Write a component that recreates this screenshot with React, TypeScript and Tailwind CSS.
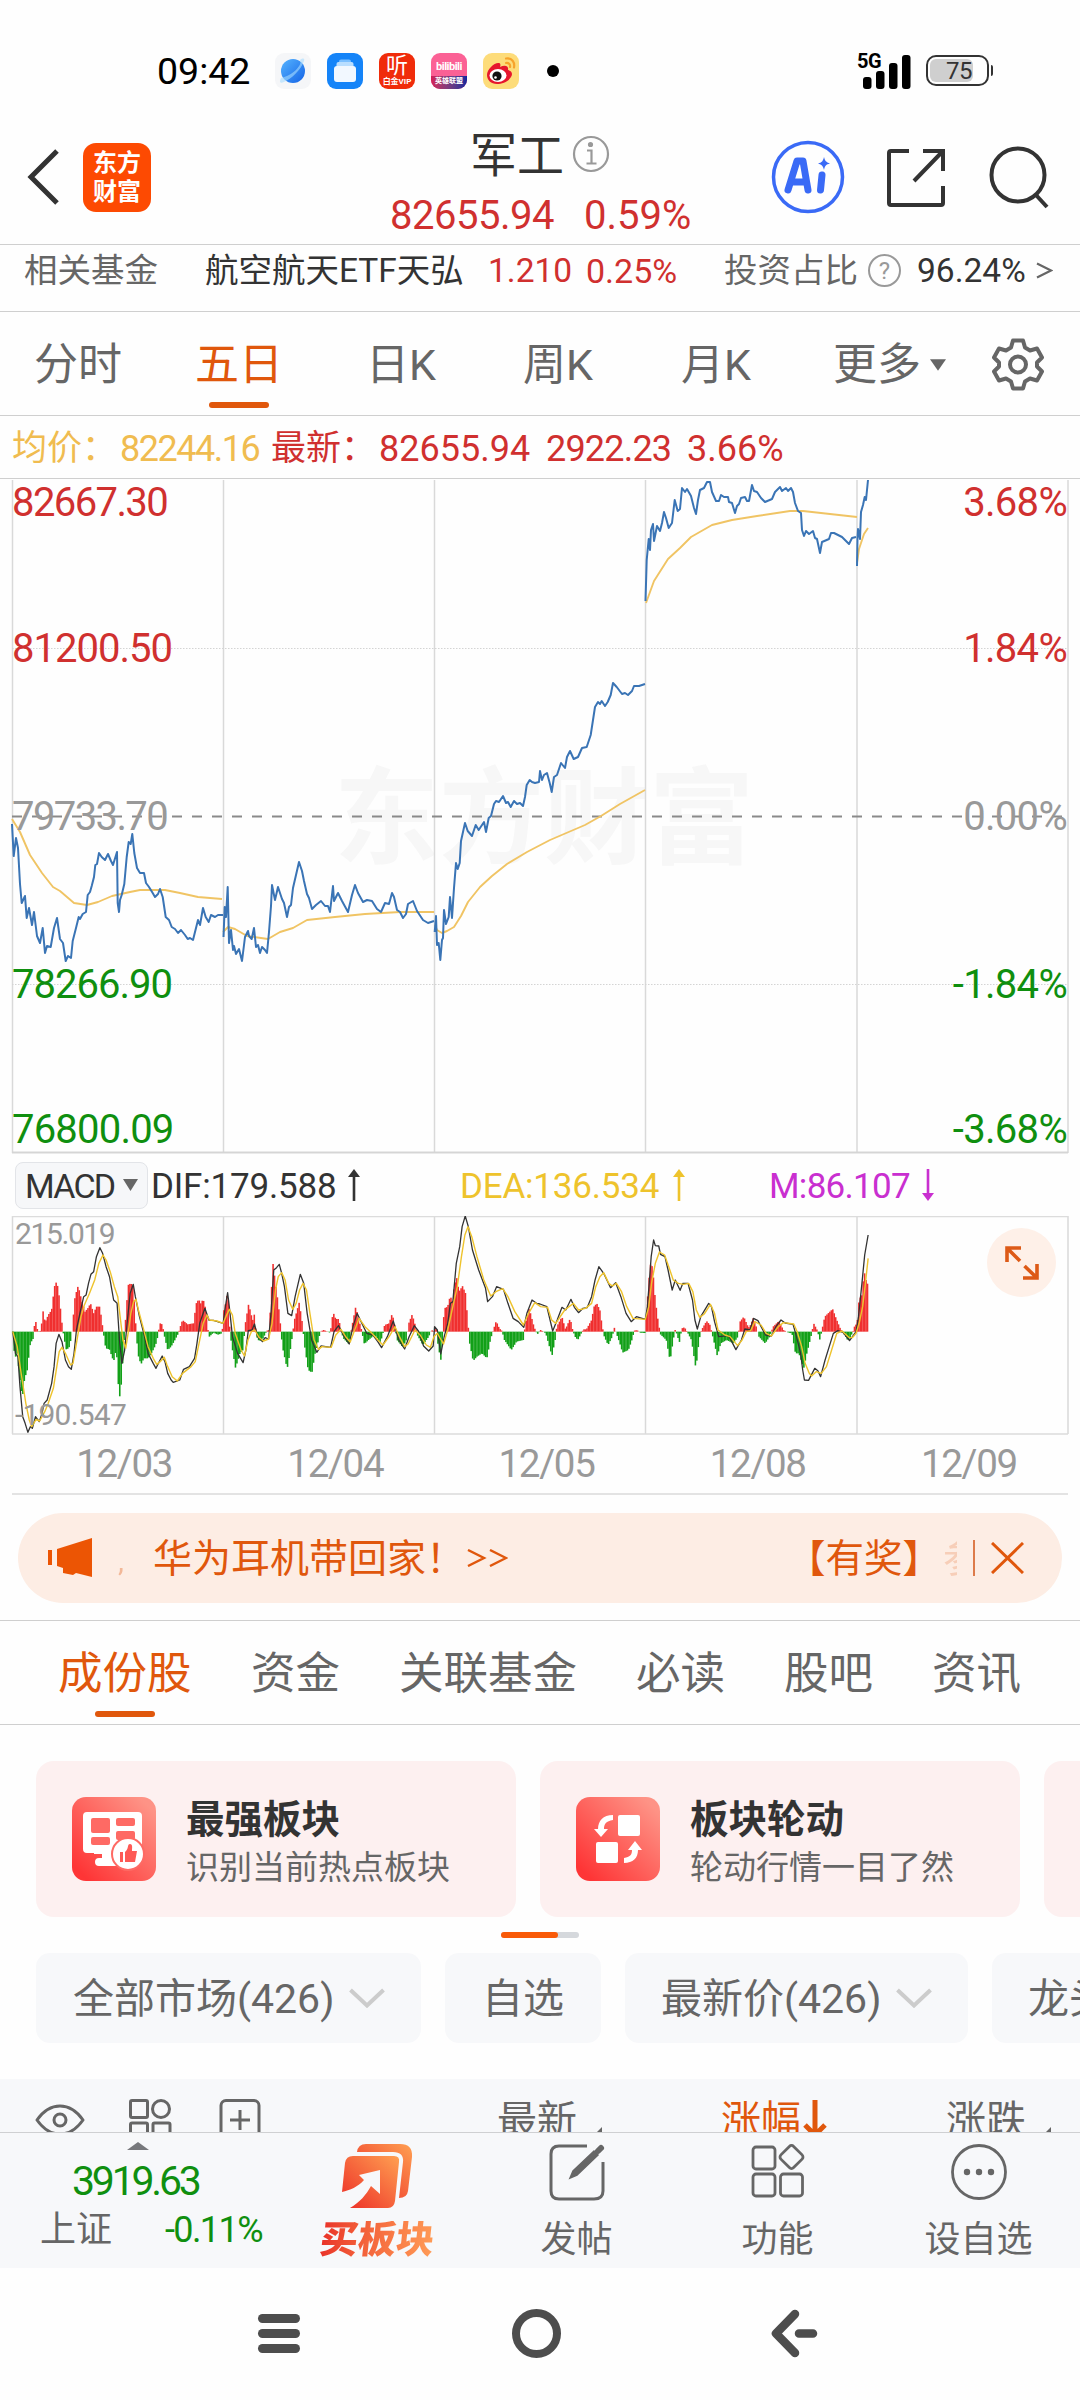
import React from 'react';

const VLINES = [12.5, 223.5, 434.5, 645.5, 857, 1068];

const PRICE_LINES = [
  '12,824 13.7,856 16,838 18,848 20,884 21.7,903 25,896 26.7,918 29,908 32,925 34,912 37,936 40,943 42.7,928 45,953 47,946 50.7,947 54,928 57,918 60,939 63,943 65.7,961 68,956 71,958 72.7,941 76,928 78.7,917 80,919 82.7,914 86,912 87.7,895 90,892 91.7,886 94,877 95.3,865 97,864 99,853 101.7,857 105,860 108,854 111,861 113,865 117,852 117.7,903 119,912 120,900 121.7,895 124.3,884 126.7,857 128.7,842 130.7,844 132.3,834 134.3,853 137,868 140,873 144,873 146,883 149,887 152.7,893 155,897 158,894 160,889 162.7,897 165.7,917 169,920 171.7,927 175,929 178,933 181,930 185,935 187.7,939 190,938 193,940 196,928 198,920 200,925 203,908 205.7,917 208.7,922 211,915 215,917 218,915 223,915',
  '223.5,937 224.7,907 226,917 227.7,887 229,943 231,930 233,950 234,946 236,954 239,949 242,961 245,937 248,931 249,936 251.7,939 254,928 256,947 258,945 260,953 262,947 265,950 267,953 269,932 271,906 272,885 275,900 278,887 282,899 284,903 287,917 289,907 291,905 293,888 296,875 299,862 302,871 304,881 307,894 309,898 312,909 316,905 321,901 325,906 328,906 330,912 333,886 334,901 338,893 342,901 348,912 352,895 355,885 358,893 363,902 367,900 372,901 377,909 381,912 385,903 389,904 392,893 394,897 397,910 400,912 403,918 406,914 408,904 413,901 417,911 423,920 428,923 434,921',
  '434.7,932 436,916 437,945 438.7,943 440.3,960 442,940 443,938 444,910 446,924 448.7,917 450,897 452,918 454,888 456,863 457.7,869 459.7,863 461,841 465,823 467.7,831 472,836 475.7,825 478.7,830 484,822 486,832 488.7,818 491,816 494,804 496,801 499,802 503,796 506,803 508,802 510.7,807 514,801 517,804 520,803 523,806 525,797 526.7,785 529.7,780 532,782 535,783 539,782 540,771 542,780 544,775 547,773 549.7,783 551.7,792 554,777 557,775 561,763 565,768 567,757 570,751 573.7,759 578,757 582,748 586.7,747 590.7,735 593,720 595,707 598,702 600,704 601.7,701 605,706 607.7,702 610.7,695 613,683 616.7,687 622,694 625,693 628,695 632,691 634,686 639,686 645,684',
  '645.5,601 646.7,560 648.7,539 650,550 651,530 653,524 654,541 657,526 660,531 662,523 664,512 666,518 668.7,528 672,523 674.7,500 677.7,511 680,509 682,488 685,492 687,489 691,496 694,508 696,514 698,500 700,490 704,488 707,482 710,482 712,492 716,501 719,501 721,495 724,497 728,497 729,502 732,503 735,513 737,506 739,504 741,498 745,497 747,501 749,501 752,485 754,491 757,492 761,498 765,502 772,499 775,492 780,487 782,491 786,488 788,491 791,488 793,492 795,503 798,511 801,513 802,530 804,536 806,531 809,534 813,531 815,538 817,539 820,553 822,542 829,539 831,533 834,533 842,537 849,544 852,538 856,537',
  '857,566 857.5,538 858,529 860,539 861,512 863,505 864.7,497 866,500 868,480',
];

const AVG_LINES = [
  '12,819 20,832 30,855 42,873 53,887 60,891 74,903 87,905 98,902 112,896 130,892 140,890 165,890 180,893 198,897 222,899',
  '223,932 228,927 235,929 247,936 268,939 280,932 293,928 307,920 335,917 365,914 400,912 434,912',
  '435,925 437,930 442,933 447,931 454,927 461,916 468,902 480,887 492,876 507,864 527,852 550,840 585,825 601,816 620,804 645,790',
  '646,603 654,581 668,559 680,548 691,537 712,525 732,520 757,516 790,511 803,511 830,514 857,517',
  '857,563 859,549 862,540 864,534 868,528',
];

const DIF =
  '37,575 45,640 52,650 58,740 66,830 73,850 81,877 88,860 94,865 103,830 114,845 122,820 128,790 137,780 150,730 157,680 163,610 171,583 180,605 190,660 199,680 207,688 215,640 222,570 232,520 243,470 250,465 257,430 264,403 272,395 280,350 290,323 298,340 308,380 318,410 330,480 340,490 347,600 354,670 362,630 370,540 378,460 387,433 393,470 405,530 420,590 430,640 445,670 453,685 460,670 471,648 479,665 487,700 497,720 503,727 522,720 533,688 550,680 565,655 572,610 580,550 595,505 607,541 620,541 648,550 653,510 661,458 667,510 675,590 690,640 706,668 714,630 721,572 732,570 739,552 748,590 762,605 770,593 780,597 787,520 795,390 803,383 811,373 818,400 826,440 836,520 847,527 857,470 872,403 882,430 892,520 905,600 920,637 932,618 960,622 970,575 983,557 1000,590 1014,612 1025,560 1037,520 1050,548 1065,580 1083,585 1097,605 1108,623 1125,590 1142,543 1158,600 1175,627 1188,590 1203,557 1215,573 1230,618 1245,633 1258,618 1262,560 1270,570 1280,642 1290,590 1300,550 1308,490 1315,485 1325,370 1335,320 1342,260 1351,228 1360,260 1372,330 1390,390 1410,445 1416,485 1430,470 1442,440 1462,448 1475,490 1490,535 1505,545 1521,562 1530,520 1545,480 1558,490 1568,492 1588,500 1605,573 1618,540 1632,502 1643,510 1658,478 1668,502 1680,518 1693,505 1705,503 1718,470 1728,420 1739,380 1753,400 1773,443 1788,428 1803,470 1818,520 1833,545 1848,530 1874,538 1880,500 1886,420 1891,350 1898,300 1903,317 1913,318 1918,343 1931,350 1940,390 1952,450 1961,420 1975,451 1983,430 1998,430 2011,480 2018,540 2025,567 2035,530 2058,490 2066,500 2075,545 2087,590 2116,587 2137,629 2153,600 2163,567 2178,570 2188,535 2201,542 2223,585 2240,588 2253,560 2268,540 2280,549 2303,553 2313,590 2325,640 2331,690 2336,720 2348,721 2366,685 2375,692 2383,710 2396,660 2408,620 2420,580 2433,572 2448,577 2467,602 2486,575 2493,530 2503,430 2511,345 2521,285';

const DEA =
  '37,575 50,620 60,690 75,790 85,840 92,860 105,838 115,843 130,815 140,790 155,745 165,680 172,635 180,622 190,640 205,675 212,670 222,610 235,530 245,495 260,460 275,420 287,370 299,345 308,360 320,395 332,440 342,470 350,540 357,600 365,625 372,580 380,520 388,485 395,478 402,510 415,560 430,620 445,655 455,673 465,665 477,652 485,675 500,710 515,723 530,700 555,680 567,665 578,610 590,550 601,525 608,540 630,543 648,550 656,530 666,508 675,525 683,580 700,630 710,648 720,600 730,575 740,570 752,592 765,603 780,597 790,550 800,450 808,410 818,398 828,420 838,480 850,508 860,490 870,450 880,430 890,450 900,520 912,600 925,628 935,620 962,622 975,585 990,568 1005,592 1017,606 1030,570 1043,535 1060,560 1080,580 1100,603 1112,615 1130,590 1147,560 1160,590 1175,620 1185,612 1205,570 1220,585 1238,615 1250,622 1260,590 1270,580 1288,612 1300,570 1315,500 1328,440 1340,350 1350,285 1359,260 1370,290 1385,350 1405,420 1425,468 1440,455 1460,446 1475,470 1495,515 1520,555 1535,520 1553,488 1570,500 1590,502 1602,540 1614,550 1630,525 1640,510 1665,490 1680,510 1700,505 1718,490 1730,440 1742,410 1753,398 1768,430 1778,438 1790,430 1805,455 1820,500 1838,535 1874,538 1884,500 1892,430 1903,370 1915,336 1930,345 1942,380 1955,420 1970,430 1985,433 2000,430 2012,455 2022,510 2032,532 2045,522 2063,493 2075,520 2085,570 2105,585 2120,590 2142,617 2155,600 2167,575 2180,572 2192,545 2210,555 2225,580 2240,588 2260,560 2275,548 2305,552 2315,575 2328,620 2338,670 2350,700 2357,708 2370,695 2385,700 2400,680 2415,630 2430,580 2445,573 2465,592 2475,593 2486,580 2495,550 2505,500 2512,440 2521,355';

const HISTOGRAM =
  '37,580 43,655 50,640 58,720 65,775 72,710 78,700 88,610 97,595 98,570 103,540 109,570 115,580 120,560 125,513 131,548 140,525 150,510 158,440 165,423 172,470 180,550 184,580 192,628 200,625 208,590 212,540 218,470 227,437 237,480 247,515 255,505 263,490 272,520 280,500 290,500 298,560 302,590 307,625 318,628 330,665 338,625 344,740 349,778 355,690 361,590 366,520 372,435 380,430 387,440 393,530 396,590 403,655 410,672 418,655 430,655 440,640 452,615 458,590 461,570 467,543 474,568 478,590 487,630 497,620 508,600 518,580 522,565 530,540 545,553 562,550 570,490 577,478 583,490 590,477 598,510 604,570 608,590 620,578 633,584 645,580 651,500 656,490 661,447 667,560 672,610 684,684 697,640 706,630 711,560 722,492 731,530 736,545 738,520 743,570 748,600 760,603 775,572 782,570 787,470 793,372 800,430 808,490 815,560 820,620 834,687 843,630 850,580 855,540 869,487 878,550 885,620 895,690 906,698 915,640 925,600 930,575 940,570 958,578 962,560 967,515 975,537 984,537 990,570 997,595 1013,612 1020,570 1033,500 1042,540 1050,570 1058,612 1070,600 1088,585 1105,607 1112,580 1117,555 1130,550 1139,520 1147,560 1153,600 1170,622 1180,600 1187,550 1197,523 1207,560 1212,585 1228,615 1245,590 1253,570 1262,575 1266,548 1270,600 1280,662 1286,580 1290,505 1300,500 1308,465 1313,490 1319,440 1326,412 1333,455 1343,438 1352,460 1358,540 1364,610 1374,663 1385,650 1400,640 1414,655 1424,600 1431,575 1441,543 1450,565 1458,573 1465,600 1485,630 1500,605 1520,600 1526,550 1537,505 1548,550 1556,575 1562,582 1570,570 1585,580 1603,648 1612,600 1617,560 1632,530 1642,568 1656,535 1663,570 1670,590 1678,600 1688,580 1694,568 1703,568 1718,540 1725,500 1733,490 1742,510 1749,560 1755,590 1766,615 1778,590 1784,563 1790,580 1800,610 1808,638 1825,630 1835,600 1842,572 1850,570 1858,578 1873,579 1880,480 1888,373 1895,380 1903,480 1912,550 1918,583 1935,600 1946,663 1955,600 1961,568 1973,607 1980,565 1988,562 1998,580 2008,600 2021,687 2030,600 2037,570 2052,543 2062,555 2070,590 2083,648 2093,610 2110,600 2130,610 2143,590 2149,545 2160,530 2170,555 2176,563 2188,533 2196,560 2204,590 2222,610 2235,590 2245,560 2262,543 2275,570 2290,578 2300,580 2310,640 2320,640 2334,685 2343,640 2355,590 2363,550 2373,570 2381,600 2387,570 2395,530 2405,520 2418,507 2428,535 2440,565 2450,580 2463,603 2475,580 2482,558 2489,550 2495,475 2502,470 2509,400 2513,400 2516,430 2522,432';

const ZERO = 575;
const BAR_STEP = 4.2;

// one thin bar per step, read off the envelope
const bars = (() => {
  const pts = HISTOGRAM.split(' ').map((p) => p.split(',').map(Number));
  const out: { x: number; y: number }[] = [];
  let i = 0;
  for (let x = pts[0][0]; x <= pts[pts.length - 1][0]; x += BAR_STEP) {
    while (i < pts.length - 2 && pts[i + 1][0] < x) i++;
    const [x0, y0] = pts[i];
    const [x1, y1] = pts[i + 1];
    out.push({ x, y: y0 + ((y1 - y0) * (x - x0)) / (x1 - x0) });
  }
  return out;
})();

const StatusBar: React.FC = () => (
  <div className="flex h-[130px] items-start pt-[53px] text-black">
    <span className="ml-[157px] w-[118px] text-[37.500px] leading-[37px]">09:42</span>
    <div className="flex gap-4">
      <svg className="h-9 w-9" viewBox="0 0 36 36">
        <defs>
          <linearGradient id="planet" x1="0" y1="0" x2="1" y2="1">
            <stop offset="0" stopColor="#56b4ff" />
            <stop offset="1" stopColor="#1463e6" />
          </linearGradient>
        </defs>
        <rect width="36" height="36" rx="9" fill="#f5f6f8" />
        <circle cx="18" cy="18" r="12" fill="url(#planet)" />
        <path d="M6 25c-2 4-1 6 3 4C16 26 26 17 29 8c1-3-1-3-4-1 3 5-8 16-19 18z" fill="#a6dcff" opacity=".6" />
      </svg>
      <svg className="h-9 w-9" viewBox="0 0 36 36">
        <rect width="36" height="36" rx="9" fill="#1584f8" />
        <rect x="12" y="6.500" width="12" height="5" rx="2" fill="#7cc0ff" />
        <rect x="9.500" y="9" width="17" height="6" rx="2" fill="#b9deff" />
        <rect x="7" y="13" width="22" height="16" rx="3" fill="#f2f8ff" />
      </svg>
      <div className="flex h-9 w-9 flex-col items-center rounded-[9px] bg-[#f02c0a] text-white">
        <span className="text-[22px] leading-[25px]">听</span>
        <span className="text-[8px] leading-[8px] font-bold whitespace-nowrap">白金VIP</span>
      </div>
      <div className="flex h-9 w-9 flex-col items-center overflow-hidden rounded-[9px] bg-[#fb6195] text-white">
        <span className="h-[23px] text-[11px] leading-[28px] font-bold tracking-[-0.5px]">bilibili</span>
        <span className="h-[13px] w-full bg-gradient-to-r from-[#d51b56] to-[#14249c] text-center text-[7px] leading-[11px] font-bold whitespace-nowrap">
          英雄联盟
        </span>
      </div>
      <svg className="h-9 w-9" viewBox="0 0 36 36">
        <rect width="36" height="36" rx="9" fill="#fddc7a" />
        <path d="M4 22c0-6 8-13 12-12 2 .6 1.500 3 1 4 4-2 9-2 8 3 4 1 5 4 3 7-3 5-9 7-14 7-6 0-10-4-10-9z" fill="#e6162d" />
        <ellipse cx="15" cy="22.500" rx="8.500" ry="6.500" fill="#fff" />
        <circle cx="14" cy="23" r="4.600" fill="#111" />
        <circle cx="12.500" cy="24.500" r="1.300" fill="#fff" />
        <path d="M23 5.500c6-1 9 4 8 9M23 10c3-.3 4.500 1.500 4 4" fill="none" stroke="#f7a32b" strokeWidth="2.200" strokeLinecap="round" />
      </svg>
    </div>
    <i className="mt-[12px] ml-[28px] block h-3 w-3 rounded-full bg-black" />
    <div className="relative ml-[304px] h-[38px] w-[50px]">
      <span className="absolute top-[-2px] left-[-6px] text-[20px] leading-[20px] font-bold tracking-[-0.5px]">5G</span>
      <svg className="h-[38px] w-[50px]" viewBox="0 0 50 38">
        <rect x="0" y="24" width="8.500" height="12" rx="3" />
        <rect x="13" y="18" width="8.500" height="18" rx="3" />
        <rect x="26" y="10" width="8.500" height="26" rx="3" />
        <rect x="39" y="2" width="8.500" height="34" rx="3" />
      </svg>
    </div>
    <div className="mt-[2px] ml-[13px] flex h-[31px] w-[63px] items-center rounded-[10px] border-[2.500px] border-[#333] p-[2px]">
      <div className="flex h-full w-[43px] items-center justify-end rounded-[6px] bg-[#cfcfcf] pr-[1px] text-[24px] leading-none tracking-[-0.5px] text-[#333]">
        75
      </div>
    </div>
    <i className="mt-[12px] ml-[2px] block h-[11px] w-[2px] rounded-r bg-[#333]" />
  </div>
);

const Header: React.FC = () => (
  <header className="flex h-[115px] border-b border-[#cfcfcf]">
    <svg className="mt-[17px] ml-[24px] h-[60px] w-[38px]" viewBox="0 0 38 60" fill="none" stroke="#333" strokeWidth="5">
      <path d="M33 4L7 30l26 26" />
    </svg>
    <div className="mt-[13px] ml-[21px] flex h-[69px] w-[68px] flex-col items-center justify-center rounded-[13px] bg-[#fd4a02] text-[24px] leading-[29px] font-bold text-white">
      <span>东方</span>
      <span>财富</span>
    </div>
    <div className="ml-[239px] w-[303px]">
      <div className="flex h-[51px] items-center pl-[80px]">
        <span className="w-[102px] text-[47px] leading-none text-[#333]">军工</span>
        <svg className="-mt-[3px] h-[38px] w-[38px]" viewBox="0 0 38 38" fill="none" stroke="#999" strokeWidth="2.200">
          <circle cx="19" cy="19" r="17" />
          <path d="M15 15.500h4.500V28M14.500 28.500h10" />
          <circle cx="18.500" cy="9.500" r="1.500" fill="#999" />
        </svg>
      </div>
      <div className="mt-[13px] flex h-[44px] items-center text-[40px] leading-none text-[#d0302f]">
        <span className="w-[194px] tracking-[-0.5px]">82655.94</span>
        <span>0.59%</span>
      </div>
    </div>
    <svg className="mt-[10px] ml-[78px] h-[74px] w-[74px]" viewBox="0 0 74 74">
      <circle cx="37" cy="37" r="34.500" fill="none" stroke="#3a6af6" strokeWidth="3.500" />
      <path d="M17 50l9-29h6l5 29M21 42h12" fill="none" stroke="#3a6af6" strokeWidth="7" strokeLinejoin="round" strokeLinecap="round" />
      <path d="M51 35l-1.500 15" stroke="#3a6af6" strokeWidth="7" strokeLinecap="round" />
      <path d="M53 17c1 4 2 5 6 6.500-4 1-5 2-6 6.500-1-4-2-5.500-6-6.500 4-1 5-2.500 6-6.500z" fill="#3a6af6" />
    </svg>
    <svg className="mt-[17px] ml-[40px] h-[62px] w-[62px]" viewBox="0 0 62 62" fill="none" stroke="#333" strokeWidth="4">
      <path d="M24 4H6q-2 0-2 2v50q0 2 2 2h50q2 0 2-2V39M38 4h20v20M58 4L29 34" />
    </svg>
    <svg className="mt-[15px] ml-[39px] h-[64px] w-[66px]" viewBox="0 0 66 64" fill="none" stroke="#333" strokeWidth="4">
      <circle cx="32" cy="30" r="26.500" />
      <path d="M50 50l11 12" />
    </svg>
  </header>
);

const FundRow: React.FC = () => (
  <div className="flex h-[67px] items-start border-b border-[#cfcfcf] pt-[5px] text-[33.500px] leading-[42px] whitespace-nowrap">
    <span className="ml-[24px] w-[181px] text-[#666]">相关基金</span>
    <span className="w-[283px] text-[#333]">航空航天ETF天弘</span>
    <span className="w-[98px] text-[#d0302f]">1.210</span>
    <span className="w-[138px] text-[34px] text-[#d0302f]">0.25%</span>
    <span className="w-[144px] text-[#666]">投资占比</span>
    <span className="mt-[4px] flex h-[33px] w-[33px] items-center justify-center rounded-full border-2 border-[#999] text-[24px] text-[#999]">?</span>
    <span className="ml-[16px] w-[119px] text-[#333]">96.24%</span>
    <svg className="mt-[12px] h-[17px] w-[17px]" viewBox="0 0 17 17" fill="none" stroke="#666" strokeWidth="2.200">
      <path d="M1 1.500l14 7-14 7" />
    </svg>
  </div>
);

const Tabs: React.FC = () => (
  <nav className="flex h-[104px] items-center border-b border-[#cfcfcf] pt-[3px] text-[44px] leading-none whitespace-nowrap text-[#666]">
    <span className="ml-[34px] w-[161px]">分时</span>
    <span className="relative w-[171px] text-[#e0570c]">
      五日
      <i className="absolute top-[59px] left-[14px] block h-[6px] w-[60px] rounded-full bg-[#e0570c]" />
    </span>
    <span className="w-[157px] text-[43px]">日K</span>
    <span className="w-[158px] text-[43px]">周K</span>
    <span className="w-[152px] text-[43px]">月K</span>
    <span className="w-[97px]">更多</span>
    <svg className="h-[12px] w-[16px]" viewBox="0 0 17 12" fill="#666">
      <path d="M0 0h17L8.500 12z" />
    </svg>
    <svg className="-mt-[2px] ml-[45px] h-[54px] w-[54px]" viewBox="0 0 54 54" fill="none" stroke="#666" strokeWidth="4">
      <path d="M22 3.500h10l2 7 5 3 7-2 5 9-5 5v4l5 5-5 9-7-2-5 3-2 7H22l-2-7-5-3-7 2-5-9 5-5v-4l-5-5 5-9 7 2 5-3z" strokeLinejoin="round" />
      <circle cx="27" cy="27.500" r="8" />
    </svg>
  </nav>
);

const PriceInfo: React.FC = () => (
  <div className="flex h-[63px] items-center border-b border-[#cfcfcf] pt-[3px] text-[36px] leading-none whitespace-nowrap text-[#d0302f]">
    <span className="ml-[12px] w-[108px] text-[35px] text-[#f0bc50]">均价：</span>
    <span className="w-[151px] tracking-[-1.500px] text-[#f0bc50]">82244.16</span>
    <span className="w-[108px] text-[35px]">最新：</span>
    <span className="w-[167px]">82655.94</span>
    <span className="w-[141px] tracking-[-0.8px]">2922.23</span>
    <span>3.66%</span>
  </div>
);

const AXIS = [
  { left: '82667.30', right: '3.68%', color: 'text-[#d0302f]' },
  { left: '81200.50', right: '1.84%', color: 'text-[#d0302f]' },
  { left: '79733.70', right: '0.00%', color: 'text-[#999]' },
  { left: '78266.90', right: '-1.84%', color: 'text-[#0f8f0f]' },
  { left: '76800.09', right: '-3.68%', color: 'text-[#0f8f0f]' },
];

const AXIS_TOPS = ['top-[3px]', 'top-[149px]', 'top-[317px]', 'top-[485px]', 'top-[630px]'];
const AXIS_TRACKING = ['tracking-[-1.6px]', 'tracking-[-1px]', 'tracking-[-1.6px]', 'tracking-[-1px]', 'tracking-[-0.8px]'];

const PriceChart: React.FC = () => (
  <div className="relative h-[675px]">
    <svg className="block h-[675px] w-[1080px]" viewBox="0 479 1080 675" fill="none">
      <text x="334" y="855" fontSize="105" fontWeight="700" fill="#f7f7f7" textLength="420">
        东方财富
      </text>
      {VLINES.map((x) => (
        <path key={x} d={`M${x} 480V1153`} stroke="#d9d9d9" strokeWidth="1.500" />
      ))}
      <path d="M12 648.500H1068M12 984.500H1068" stroke="#d4d4d4" strokeDasharray="1.500 1.500" />
      <path d="M12 1152.500H1068" stroke="#d5d5d5" strokeWidth="1.800" />
      <path d="M12 816.500H1068" stroke="#8a8a8a" strokeWidth="2" strokeDasharray="10 10" />
      {AVG_LINES.map((p) => (
        <polyline key={p} points={p} stroke="#f0c464" strokeWidth="1.900" strokeLinejoin="round" />
      ))}
      {PRICE_LINES.map((p) => (
        <polyline key={p} points={p} stroke="#3a74b5" strokeWidth="2" strokeLinejoin="round" />
      ))}
    </svg>
    {AXIS.map((row, i) => (
      <div
        key={row.left}
        className={`absolute inset-x-0 flex h-[42px] items-center justify-between pr-[13px] pl-[12px] text-[40px] leading-none ${AXIS_TOPS[i]} ${row.color}`}
      >
        <span className={AXIS_TRACKING[i]}>{row.left}</span>
        <span className="tracking-[-0.700px]">{row.right}</span>
      </div>
    ))}
  </div>
);

const Arrow: React.FC<{ down?: boolean; className?: string }> = ({ down, className = '' }) => (
  <svg className={`-mt-[3px] h-[32px] w-[12px] ${down ? 'rotate-180' : ''} ${className}`} viewBox="0 0 12 32" fill="currentColor">
    <path d="M6 0l6 8H7.300v24H4.700V8H0z" />
  </svg>
);

const MacdHeader: React.FC = () => (
  <div className="flex h-[62px] items-center text-[35px] leading-none whitespace-nowrap">
    <div className="ml-[15px] flex h-[47px] w-[133px] items-center rounded-[8px] border border-[#e2e4e8] bg-[#f6f7f9] pt-[2px] pl-[9px] text-[#333]">
      <span className="w-[98px] text-[34px] tracking-[-1.800px]">MACD</span>
      <svg className="-mt-[3px] h-[12px] w-[15px] shrink-0" viewBox="0 0 15 12" fill="#666">
        <path d="M0 0h15L7.500 12z" />
      </svg>
    </div>
    <div className="ml-[3px] flex w-[309px] items-center pt-[2px] tracking-[-0.2px] text-[#333]">
      <span className="w-[197px]">DIF:179.588</span>
      <Arrow />
    </div>
    <div className="flex w-[309px] items-center pt-[2px] text-[#eec32c]">
      <span className="w-[213px] tracking-[-0.2px]">DEA:136.534</span>
      <Arrow />
    </div>
    <div className="flex items-center pt-[2px] text-[#c92fd0]">
      <span className="w-[153px] tracking-[-0.7px]">M:86.107</span>
      <Arrow down />
    </div>
  </div>
);

const MacdChart: React.FC = () => (
  <div className="relative h-[219px]">
    <svg className="block h-[219px] w-[1080px]" viewBox="0 1216 1080 219" fill="none">
      {VLINES.map((x) => (
        <path key={x} d={`M${x} 1216V1434`} stroke="#d9d9d9" strokeWidth="1.500" />
      ))}
      <path d="M12 1216.500H1068M12 1434H1068" stroke="#dcdcdc" strokeWidth="1.600" />
      <g transform="translate(0 1140) scale(.34436 .33333)">
        {bars.map((b) => (
          <rect
            key={b.x}
            x={b.x - 2.3}
            y={Math.min(b.y, ZERO)}
            width="4.600"
            height={Math.abs(b.y - ZERO)}
            fill={b.y < ZERO ? '#f02f2f' : '#12a018'}
          />
        ))}
        <polyline points={DIF} stroke="#333" strokeWidth="1.300" vectorEffect="non-scaling-stroke" strokeLinejoin="round" />
        <polyline points={DEA} stroke="#eec32c" strokeWidth="1.400" vectorEffect="non-scaling-stroke" strokeLinejoin="round" />
      </g>
    </svg>
    <span className="absolute top-[3px] left-[15px] text-[30px] leading-none tracking-[-1.400px] text-[#999]">215.019</span>
    <span className="absolute top-[184px] left-[15px] text-[30px] leading-none tracking-[-0.8px] text-[#999]">-190.547</span>
    <div className="absolute top-[12px] left-[987px] flex h-[69px] w-[69px] items-center justify-center rounded-full bg-[#fef0e8]">
      <svg className="h-[34px] w-[34px]" viewBox="0 0 34 34" fill="none" stroke="#dd5a17" strokeWidth="3.600">
        <path d="M2 16V2h14M2 2l13 13M32 18v14H18M32 32L19.500 20" />
      </svg>
    </div>
  </div>
);

const Dates: React.FC = () => (
  <div className="mx-[12px] flex h-[60px] items-center border-b-2 border-[#e3e3e3] text-[38.500px] leading-none tracking-[-1.300px] text-[#999]">
    {['12/03', '12/04', '12/05', '12/08', '12/09'].map((d) => (
      <span key={d} className="flex-1 pl-[13px] text-center">
        {d}
      </span>
    ))}
  </div>
);

const Banner: React.FC = () => (
  <div className="mx-[18px] mt-[18px] flex h-[90px] items-center rounded-full bg-[#fdede4] text-[38.500px] leading-none whitespace-nowrap text-[#e0570c]">
    <svg className="ml-[29px] h-[40px] w-[47px]" viewBox="0 0 47 40" fill="#ec5504">
      <path d="M1 12h4v15H1zM10 11l35-11v39l-16-4-3 2-10-2v-5l-6-2z" />
    </svg>
    <span className="ml-[24px] w-[35px] pt-[6px] text-[30px] opacity-35">,</span>
    <span className="w-[313px] pt-[3px] text-[39px]">华为耳机带回家！</span>
    <svg className="h-[18px] w-[42px]" viewBox="0 0 42 18" fill="none" stroke="#e0570c" strokeWidth="2.400">
      <path d="M2 1l16 8-16 8M24 1l16 8-16 8" />
    </svg>
    <span className="ml-[279px] w-[156px] pt-[3px]">【有奖】</span>
    <span className="w-[14px] overflow-hidden pt-[3px] opacity-20">参</span>
    <i className="ml-[16px] block h-[36px] w-[2px] bg-[#dd7b4a]" />
    <svg className="ml-[16px] h-[32px] w-[33px]" viewBox="0 0 33 32" fill="none" stroke="#e0570c" strokeWidth="3">
      <path d="M1 1l31 30M32 1L1 31" />
    </svg>
  </div>
);

const SectionTabs: React.FC = () => (
  <nav className="mt-[17px] flex h-[105px] items-center border-y border-[#cfcfcf] pt-[3px] text-[44.500px] leading-none whitespace-nowrap text-[#666]">
    <span className="relative ml-[58px] w-[193px] text-[#e0570c]">
      成份股
      <i className="absolute top-[59px] left-[37px] block h-[6px] w-[60px] rounded-full bg-[#e0570c]" />
    </span>
    <span className="w-[148px]">资金</span>
    <span className="w-[237px]">关联基金</span>
    <span className="w-[148px]">必读</span>
    <span className="w-[148px]">股吧</span>
    <span>资讯</span>
  </nav>
);

const RedTile: React.FC<{ id: string; children: React.ReactNode }> = ({ id, children }) => (
  <svg className="h-[84px] w-[84px] shrink-0" viewBox="0 0 84 84">
    <defs>
      <linearGradient id={id} x1="0" y1="1" x2="1" y2="0">
        <stop offset="0.1" stopColor="#fe3536" />
        <stop offset="0.9" stopColor="#fe9386" />
      </linearGradient>
    </defs>
    <rect width="84" height="84" rx="14" fill={`url(#${id})`} />
    {children}
  </svg>
);

const FeatureCard: React.FC<{ title: string; desc: string; icon: React.ReactNode }> = ({ title, desc, icon }) => (
  <div className="flex h-[156px] w-[480px] shrink-0 items-center rounded-[18px] bg-[#fdf0f0] pl-[36px]">
    {icon}
    <div className="ml-[30px] pt-[9px] whitespace-nowrap">
      <div className="text-[38.500px] leading-[48px] font-bold text-[#333]">{title}</div>
      <div className="text-[33px] leading-[48px] text-[#666]">{desc}</div>
    </div>
  </div>
);

const Cards: React.FC = () => (
  <div className="mt-[36px] flex gap-6 overflow-hidden pl-9">
    <FeatureCard
      title="最强板块"
      desc="识别当前热点板块"
      icon={
        <RedTile id="tileA">
          <path
            d="M15 15h51a4 4 0 0 1 4 4v34H44v4H22v-1H15q-4 0-4-4V19q0-4 4-4zM30 56h14v13H27q-4 0-4-4t4-4h3z"
            fill="#fff"
          />
          <g fill="#fe6a64">
            <rect x="19" y="21" width="19" height="15" rx="2" />
            <rect x="44" y="21" width="19" height="8" rx="2" />
            <rect x="44" y="34" width="19" height="9" rx="2" />
            <rect x="19" y="40" width="19" height="8" rx="2" />
          </g>
          <circle cx="56" cy="57" r="16" fill="#fff" stroke="#fe6a64" strokeWidth="2" />
          <path d="M48 55h3v10h-3zM53 55c4-3 2-8 5-8s2 4 2 7h5l-2 11H53z" fill="#fe5a55" />
        </RedTile>
      }
    />
    <FeatureCard
      title="板块轮动"
      desc="轮动行情一目了然"
      icon={
        <RedTile id="tileB">
          <g fill="#fff">
            <rect x="42" y="18" width="22" height="21" rx="2" />
            <rect x="20" y="45" width="22" height="21" rx="2" />
            <path d="M18 32h4c0-8 5-14 15-14v5c-7 1-9 4-9 9h4l-7 8z" />
            <path d="M66 53h-4c0 8-5 13-14 13v-5c6-1 8-3 8-8h-4l7-9z" />
          </g>
        </RedTile>
      }
    />
    <div className="h-[156px] w-[480px] shrink-0 rounded-[18px] bg-[#fdf0f0]" />
  </div>
);

const Chevron: React.FC = () => (
  <svg className="h-[20px] w-[36px]" viewBox="0 0 36 20" fill="none" stroke="#ccc" strokeWidth="4">
    <path d="M1.500 2L18 17.500 34.500 2" />
  </svg>
);

const Chips: React.FC = () => (
  <div className="mt-[15px] flex overflow-hidden pl-9 text-[41px] leading-none whitespace-nowrap text-[#666] *:flex *:h-[90px] *:shrink-0 *:items-center *:rounded-[14px] *:bg-[#f7f8fa]">
    <div className="w-[385px] pl-[37px]">
      <span className="w-[276px] pt-[3px]">全部市场(426)</span>
      <Chevron />
    </div>
    <div className="ml-[24px] w-[156px] justify-center pt-[3px]">自选</div>
    <div className="ml-[24px] w-[343px] pl-[36px]">
      <span className="w-[235px] pt-[3px]">最新价(426)</span>
      <Chevron />
    </div>
    <div className="ml-[24px] w-[200px] pt-[3px] pl-[36px]">龙头股</div>
  </div>
);

const Corner: React.FC = () => (
  <svg className="mt-[20px] ml-[17px] h-[8px] w-[6px]" viewBox="0 0 8 8" fill="#666">
    <path d="M8 0v8H0z" />
  </svg>
);

const TableHead: React.FC = () => (
  <div className="mt-[36px] h-[53px] overflow-hidden bg-[#f7f8fa]">
    <div className="flex h-[82px] items-center text-[40px] leading-none whitespace-nowrap text-[#666]">
      <svg className="ml-[35px] h-[34px] w-[50px]" viewBox="0 0 50 34" fill="none" stroke="#666" strokeWidth="3">
        <path d="M2 17C9 7 16 3 25 3s16 4 23 14c-7 10-14 14-23 14S9 27 2 17z" strokeLinejoin="round" />
        <circle cx="25" cy="17" r="6" />
      </svg>
      <svg className="ml-[43px] h-[44px] w-[44px]" viewBox="0 0 44 44" fill="none" stroke="#666" strokeWidth="3">
        <rect x="2.500" y="2.500" width="17" height="17" rx="1.500" />
        <circle cx="33" cy="11" r="8.500" />
        <rect x="2.500" y="25" width="17" height="17" rx="1.500" />
        <rect x="25" y="25" width="17" height="17" rx="1.500" />
      </svg>
      <svg className="ml-[47px] h-[44px] w-[43px]" viewBox="0 0 43 44" fill="none" stroke="#666" strokeWidth="3">
        <rect x="2" y="2.500" width="38" height="38" rx="5" />
        <path d="M21 12v20M11 22h20" />
      </svg>
      <span className="ml-[235px] w-[82px] pt-[2px]">最新</span>
      <Corner />
      <span className="ml-[119px] w-[82px] pt-[2px] text-[#e0570c]">涨幅</span>
      <svg className="-mt-[1px] h-[40px] w-[24px]" viewBox="0 0 24 40" fill="none" stroke="#e0570c" strokeWidth="5">
        <path d="M12 0v36M2 25l10 10 10-10" />
      </svg>
      <span className="ml-[119px] w-[82px] pt-[2px]">涨跌</span>
      <Corner />
    </div>
  </div>
);

const BottomBar: React.FC = () => (
  <footer className="relative flex h-[136px] border-t border-[#cfd0d2] bg-[#f7f8fa] text-[36px] leading-none whitespace-nowrap text-[#666]">
    <svg className="absolute top-[9px] left-[127px] h-[8px] w-[22px]" viewBox="0 0 22 8" fill="#77787c">
      <path d="M11 0l11 8H0z" />
    </svg>
    <div className="w-[320px]">
      <div className="mt-[28px] pl-[72px] text-[41px] tracking-[-3.200px] text-[#0f8f0f]">3919.63</div>
      <div className="mt-[10px] flex items-center pl-[40px]">
        <span className="w-[125px]">上证</span>
        <span className="tracking-[-1.600px] text-[#0f8f0f]">-0.11%</span>
      </div>
    </div>
    <div className="w-[115px]">
      <svg className="mt-[10px] ml-[21px] h-[67px] w-[72px]" viewBox="0 0 72 67">
        <defs>
          <linearGradient id="buy" x1="0" y1="1" x2="1" y2="0">
            <stop offset="0" stopColor="#ec2c26" />
            <stop offset="1" stopColor="#ffa052" />
          </linearGradient>
        </defs>
        <path d="M16 9q1-8 9-8h34q13 0 12 13l-4 34q-1 7-9 7l4-36q1-10-10-10z" fill="url(#buy)" />
        <path d="M4 20q1-7 8-7h41q6 0 5 6l-4 39q-1 7-7 7H9c10-6 16-13 21-22l9 8V27l-21 5 5 5C17 44 9 47 1 49z" fill="url(#buy)" />
      </svg>
      <div className="mt-[11px] -skew-x-6 bg-gradient-to-r from-[#e93028] to-[#ff9c57] bg-clip-text text-[38px] font-black text-transparent">买板块</div>
    </div>
    <div className="ml-[41px] flex w-[201px] flex-col items-center">
      <svg className="mt-[10px] h-[58px] w-[58px]" viewBox="0 0 58 58" fill="none" stroke="#666" strokeWidth="3">
        <path d="M39 3H11q-8 0-8 8v37q0 8 8 8h35q9 0 9-8V19" />
        <path d="M22 35l3-7 21-20 4 4-21 20z" fill="#666" strokeWidth="1.500" />
        <path d="M50 8l3-3" strokeWidth="6" strokeLinecap="round" />
      </svg>
      <span className="mt-[21px]">发帖</span>
    </div>
    <div className="flex w-[201px] flex-col items-center">
      <svg className="mt-[10px] h-[58px] w-[56px]" viewBox="0 0 56 58" fill="none" stroke="#666" strokeWidth="2.800">
        <rect x="3" y="4" width="22" height="22" rx="3" />
        <rect x="3" y="31" width="22" height="22" rx="3" />
        <rect x="30.500" y="31" width="22" height="22" rx="3" />
        <rect x="32.500" y="5" width="18" height="18" rx="3" transform="rotate(45 41.500 14)" />
      </svg>
      <span className="mt-[21px]">功能</span>
    </div>
    <div className="flex w-[201px] flex-col items-center">
      <svg className="mt-[9px] h-[59px] w-[58px]" viewBox="0 0 58 59" fill="none" stroke="#666" strokeWidth="2.800">
        <circle cx="29" cy="30" r="26.500" />
        <g fill="#666" stroke="none">
          <circle cx="17" cy="30" r="3.200" />
          <circle cx="29" cy="30" r="3.200" />
          <circle cx="41" cy="30" r="3.200" />
        </g>
      </svg>
      <span className="mt-[21px]">设自选</span>
    </div>
  </footer>
);

const SystemNav: React.FC = () => (
  <div className="flex h-[132px] items-start pt-[41px] text-[#4d4d4d]">
    <div className="mt-[5px] ml-[258px] flex w-[42px] flex-col gap-[6px]">
      <i className="block h-[9px] rounded-full bg-current" />
      <i className="block h-[9px] rounded-full bg-current" />
      <i className="block h-[9px] rounded-full bg-current" />
    </div>
    <i className="ml-[212px] block h-[49px] w-[49px] rounded-full border-[8.500px] border-current" />
    <svg className="ml-[208px] h-[49px] w-[50px]" viewBox="0 0 50 49" fill="none" stroke="currentColor" strokeWidth="8.500" strokeLinecap="round" strokeLinejoin="round">
      <path d="M26 5L7 24.500 26 44M30 24.500h14" />
    </svg>
  </div>
);

export default function App() {
  return (
    <div className="h-[2400px] w-[1080px] overflow-hidden bg-[#fefefe] font-[Roboto,'Noto_Sans_CJK_SC',sans-serif]">
      <StatusBar />
      <Header />
      <FundRow />
      <Tabs />
      <PriceInfo />
      <PriceChart />
      <MacdHeader />
      <MacdChart />
      <Dates />
      <Banner />
      <SectionTabs />
      <Cards />
      <div className="mx-auto mt-[15px] flex h-[6px] w-[78px] rounded-full bg-[#d5d8dc]">
        <i className="block w-[57px] rounded-full bg-[#f95a08]" />
      </div>
      <Chips />
      <TableHead />
      <BottomBar />
      <SystemNav />
    </div>
  );
}
